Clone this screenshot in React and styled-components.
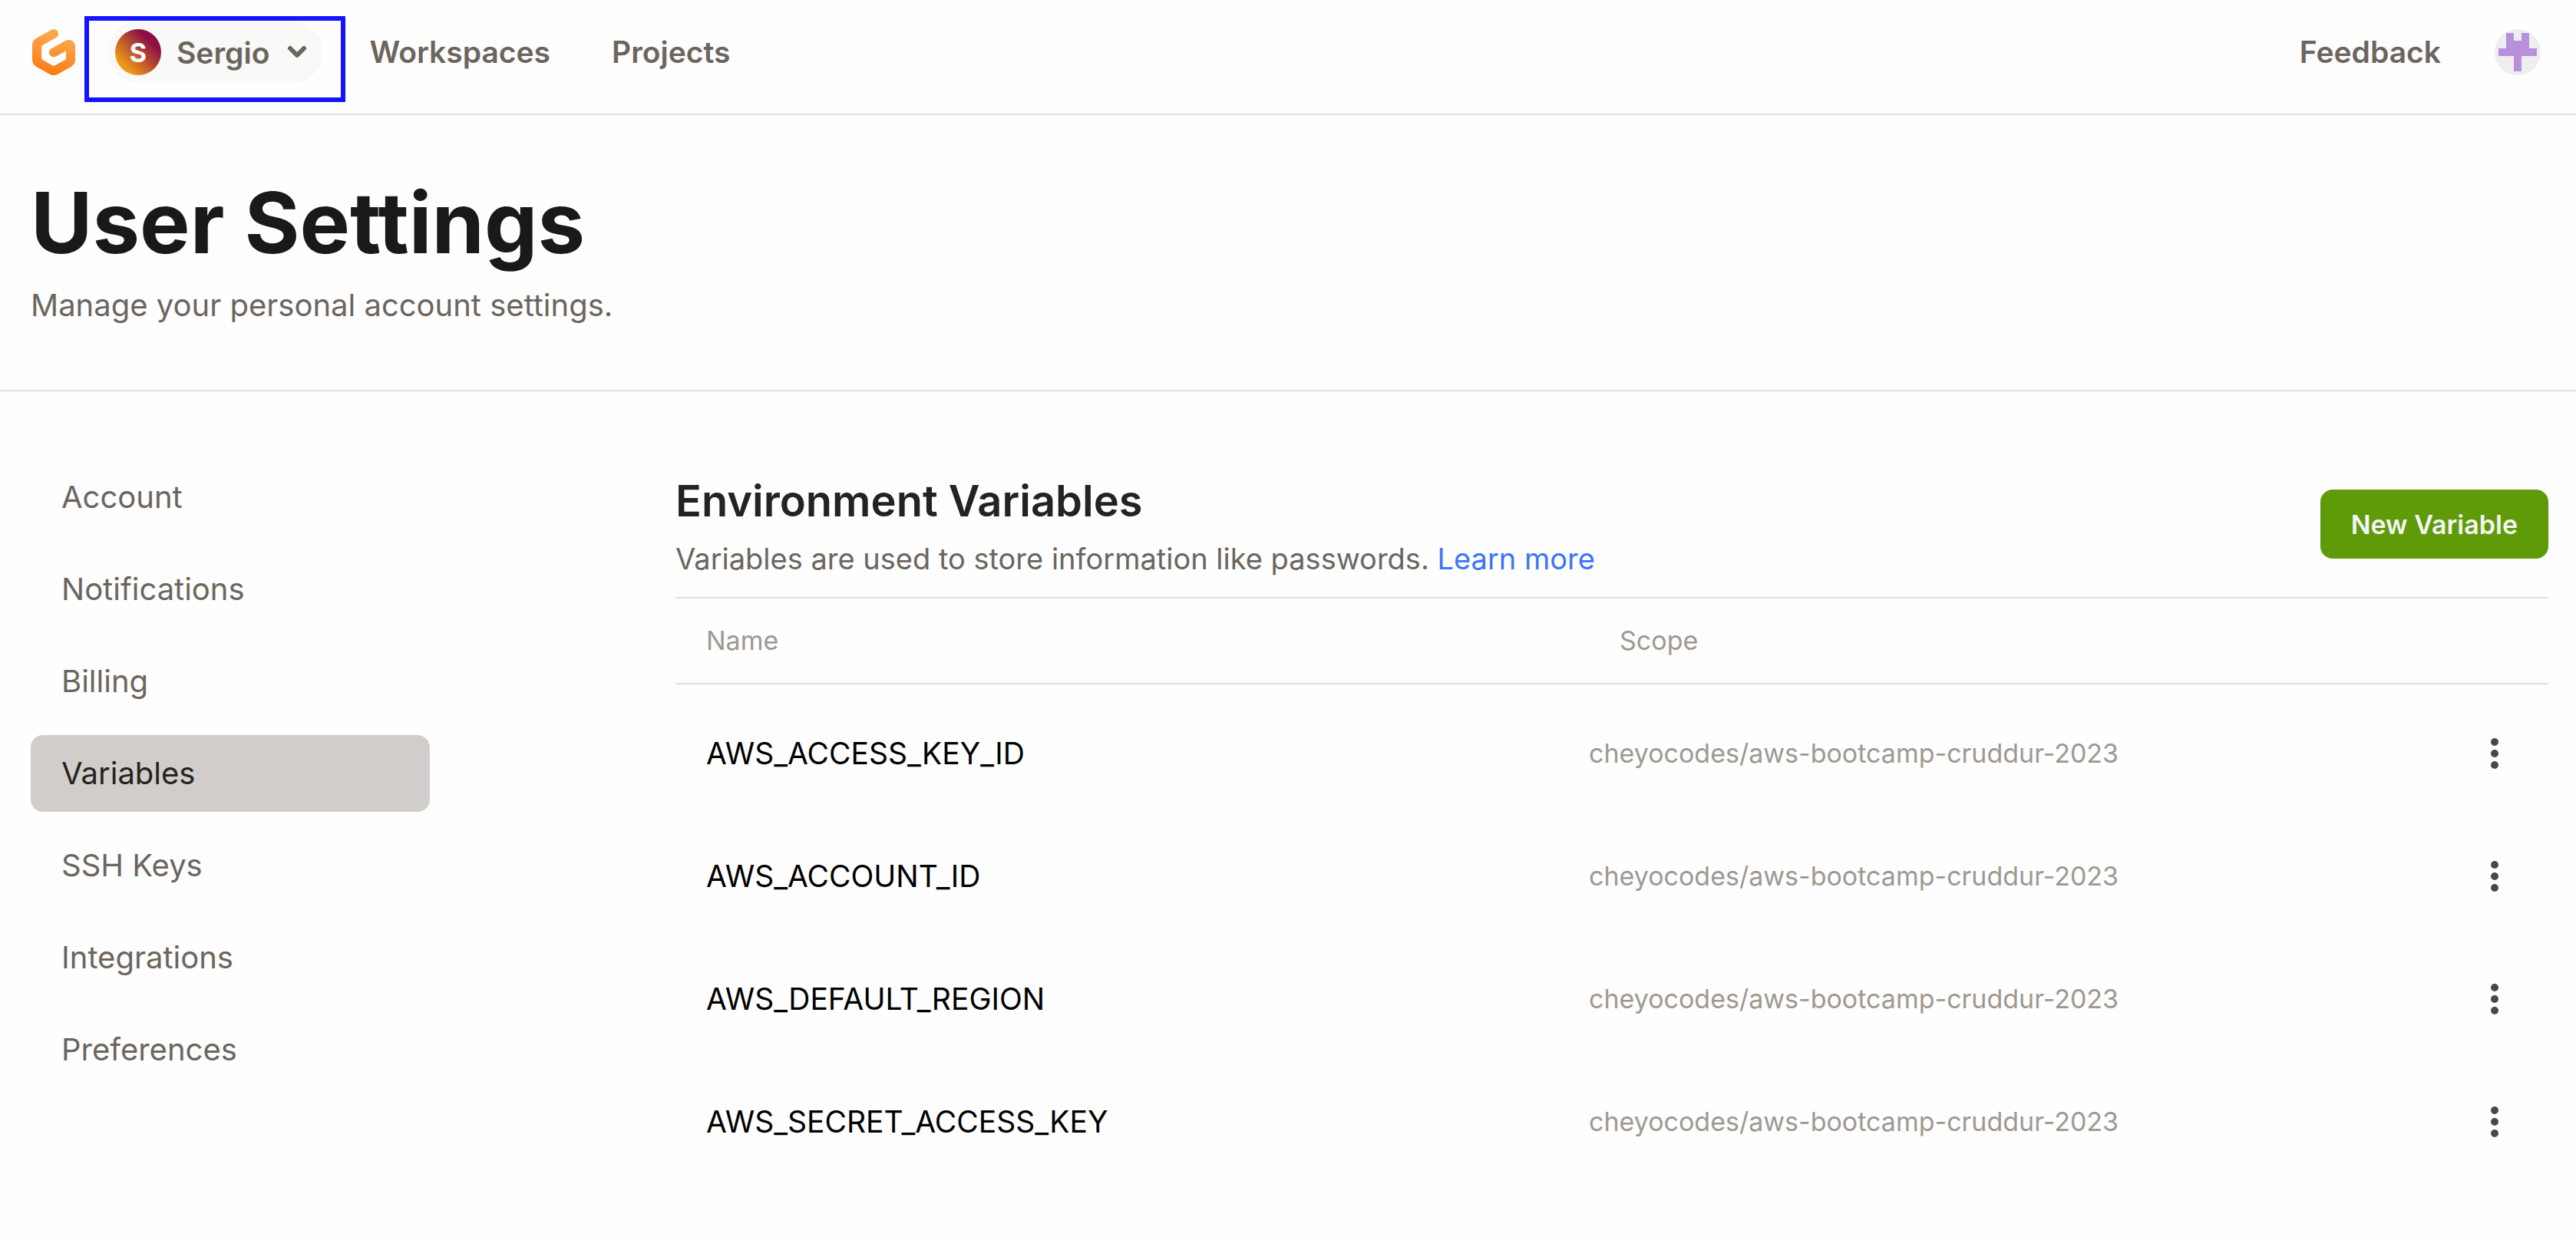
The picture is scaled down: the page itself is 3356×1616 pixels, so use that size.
import React from "react";
import styled, { createGlobalStyle } from "styled-components";

const GlobalStyle = createGlobalStyle`
  *, *::before, *::after { box-sizing: border-box; }
  body {
    margin: 0;
    background: #fefefe;
    color: #6c655e;
    font-family: Inter, "Liberation Sans", sans-serif;
    font-size: 40px;
    line-height: 60px;
  }
  h1, h2, p, ul { margin: 0; padding: 0; }
  button { font-family: inherit; cursor: pointer; }
  a { color: inherit; text-decoration: none; }
`;

const TopBar = styled.header`
  display: flex;
  align-items: center;
  justify-content: space-between;
  padding: 28px 46px 40px 42px;
  border-bottom: 2px solid #e0e0e0;
`;

const BarGroup = styled.div`
  display: flex;
  align-items: center;
  gap: ${(p) => p.$gap}px;
`;

const HomeLink = styled.a`
  display: flex;
`;

const OrgArea = styled.div`
  position: relative;
  margin-right: 60px;
`;

const Highlight = styled.span`
  position: absolute;
  top: -7px;
  right: -29px;
  bottom: -25px;
  left: -30px;
  border: 6px solid #1414ff;
  pointer-events: none;
`;

const OrgButton = styled.button`
  display: flex;
  align-items: center;
  gap: 20px;
  height: 80px;
  padding: 0 18px 0 10px;
  border: 0;
  border-radius: 40px;
  background: #f9f9f7;
  color: #6c655e;
  font-size: 39px;
  font-weight: 600;
`;

const OrgAvatar = styled.span`
  display: flex;
  align-items: center;
  justify-content: center;
  width: 60px;
  height: 60px;
  border-radius: 50%;
  background: linear-gradient(45deg, #ee9816 20%, #8c1045 75%);
  color: #ffffff;
  font-size: 34px;
  font-weight: 700;
`;

const MainNav = styled.nav`
  display: flex;
  gap: 80px;
`;

const NavLink = styled.a`
  font-size: 39px;
  font-weight: 600;
`;

const AvatarButton = styled.button`
  display: flex;
  padding: 0;
  border: 0;
  background: none;
`;

const PageHeader = styled.section`
  padding: 80px 40px;
  border-bottom: 2px solid #e0e0e0;
`;

const PageTitle = styled.h1`
  color: #1a1917;
  font-size: 110px;
  font-weight: 700;
  line-height: 120px;
`;

const PageSubtitle = styled.p`
  margin-top: 18px;
`;

const Columns = styled.div`
  display: grid;
  grid-template-columns: 520px minmax(0, 1fr);
  gap: 320px;
  padding: 88px 36px 60px 40px;
`;

const SideList = styled.ul`
  display: flex;
  flex-direction: column;
  gap: 20px;
  list-style: none;
`;

const SideLink = styled.a`
  display: block;
  padding: 20px 40px;
  border-radius: 16px;
  background: ${(p) => (p.$active ? "#d1cdca" : "transparent")};
  color: ${(p) => (p.$active ? "#242321" : "#6c655e")};
`;

const Content = styled.main`
  padding-top: 10px;
`;

const ContentHeader = styled.div`
  display: flex;
  align-items: center;
  justify-content: space-between;
  padding-bottom: 20px;
  border-bottom: 2px solid #e0e0e0;
`;

const SectionTitle = styled.h2`
  color: #242321;
  font-size: 56px;
  font-weight: 600;
  line-height: 90px;
`;

const SectionText = styled.p`
  font-size: 38px;
`;

const LearnLink = styled.a`
  color: #3b75f8;
`;

const PrimaryButton = styled.button`
  height: 90px;
  padding: 0 40px;
  border: 0;
  border-radius: 16px;
  background: #5f9b09;
  color: #f5f5f4;
  font-size: 34px;
  font-weight: 600;
`;

const Table = styled.table`
  width: 100%;
  table-layout: fixed;
  border-collapse: separate;
  border-spacing: 0;
`;

const HeadCell = styled.th`
  width: ${(p) => p.$width};
  height: 112px;
  padding: 0 40px;
  border-bottom: 2px solid #e0e0e0;
  color: #9f9891;
  font-size: 34px;
  font-weight: 400;
  text-align: left;
`;

const Cell = styled.td`
  height: 160px;
  padding: 20px 0 0;
`;

const NameCell = styled(Cell)`
  padding-left: 40px;
  color: #000000;
  font-size: 39px;
`;

const ScopeCell = styled(Cell)`
  color: #9f9891;
  font-size: 34px;
`;

const MenuButton = styled.button`
  display: flex;
  margin-left: auto;
  margin-right: 50px;
  padding: 10px 15px;
  border: 0;
  background: none;
`;

function Logo() {
  return (
    <svg width="56" height="60" viewBox="1.2 0 21.6 24" preserveAspectRatio="none" aria-hidden="true">
      <defs>
        <linearGradient id="logoFill" x1="0.65" y1="0" x2="0.4" y2="1">
          <stop offset="0" stopColor="#fdae58" />
          <stop offset="1" stopColor="#fa7c12" />
        </linearGradient>
      </defs>
      <path
        fill="url(#logoFill)"
        d="M14.033 1.195a2.387 2.387 0 0 1-.87 3.235l-6.98 4.04a.602.602 0 0 0-.3.522v6.342a.6.6 0 0 0 .3.521l5.524 3.199a.585.585 0 0 0 .586 0l5.527-3.199a.603.603 0 0 0 .299-.52V11.39l-4.969 2.838a2.326 2.326 0 0 1-3.19-.9 2.388 2.388 0 0 1 .89-3.23l7.108-4.062C20.123 4.8 22.8 6.384 22.8 8.901v6.914a4.524 4.524 0 0 1-2.245 3.919l-6.345 3.672a4.407 4.407 0 0 1-4.422 0l-6.344-3.672A4.524 4.524 0 0 1 1.2 15.816V8.51a4.524 4.524 0 0 1 2.245-3.918l7.393-4.28a2.326 2.326 0 0 1 3.195.883z"
      />
    </svg>
  );
}

function Chevron() {
  return (
    <svg width="32" height="32" viewBox="0 0 32 32" aria-hidden="true">
      <path d="M7 11l9 9 9-9" fill="none" stroke="#6c655e" strokeWidth="6" strokeLinecap="round" strokeLinejoin="round" />
    </svg>
  );
}

function Identicon() {
  return (
    <svg width="60" height="60" viewBox="0 0 60 60" aria-hidden="true">
      <circle cx="30" cy="30" r="30" fill="#eeeeee" />
      <path d="M15 5h10v10h10V5h10v20h10v10H35v20H25V35H5V25h10z" fill="#b890dc" />
    </svg>
  );
}

function Dots() {
  return (
    <svg width="10" height="40" viewBox="0 0 10 40" fill="#4c4742" aria-hidden="true">
      <circle cx="5" cy="5" r="5" />
      <circle cx="5" cy="20" r="5" />
      <circle cx="5" cy="35" r="5" />
    </svg>
  );
}

const sections = ["Account", "Notifications", "Billing", "Variables", "SSH Keys", "Integrations", "Preferences"];

const scope = "cheyocodes/aws-bootcamp-cruddur-2023";
const variables = [
  { name: "AWS_ACCESS_KEY_ID", scope },
  { name: "AWS_ACCOUNT_ID", scope },
  { name: "AWS_DEFAULT_REGION", scope },
  { name: "AWS_SECRET_ACCESS_KEY", scope },
];

export default function App() {
  return (
    <>
      <GlobalStyle />
      <TopBar>
        <BarGroup $gap={42}>
          <HomeLink href="#home" aria-label="Home">
            <Logo />
          </HomeLink>
          <BarGroup $gap={0}>
            <OrgArea>
              <OrgButton type="button" aria-haspopup="menu">
                <OrgAvatar>S</OrgAvatar>
                Sergio
                <Chevron />
              </OrgButton>
              <Highlight />
            </OrgArea>
            <MainNav>
              <NavLink href="#workspaces">Workspaces</NavLink>
              <NavLink href="#projects">Projects</NavLink>
            </MainNav>
          </BarGroup>
        </BarGroup>
        <BarGroup $gap={70}>
          <NavLink href="#feedback">Feedback</NavLink>
          <AvatarButton type="button" aria-label="User menu">
            <Identicon />
          </AvatarButton>
        </BarGroup>
      </TopBar>

      <PageHeader>
        <PageTitle>User Settings</PageTitle>
        <PageSubtitle>Manage your personal account settings.</PageSubtitle>
      </PageHeader>

      <Columns>
        <nav aria-label="Settings">
          <SideList>
            {sections.map((label) => (
              <li key={label}>
                <SideLink
                  href={"#" + label.toLowerCase().replace(" ", "-")}
                  $active={label === "Variables"}
                  aria-current={label === "Variables" ? "page" : undefined}
                >
                  {label}
                </SideLink>
              </li>
            ))}
          </SideList>
        </nav>

        <Content>
          <ContentHeader>
            <div>
              <SectionTitle>Environment Variables</SectionTitle>
              <SectionText>
                Variables are used to store information like passwords. <LearnLink href="#learn">Learn more</LearnLink>
              </SectionText>
            </div>
            <PrimaryButton type="button">New Variable</PrimaryButton>
          </ContentHeader>
          <Table>
            <thead>
              <tr>
                <HeadCell $width="1190px" scope="col">Name</HeadCell>
                <HeadCell $width="auto" scope="col">Scope</HeadCell>
                <HeadCell $width="200px" scope="col" aria-label="Actions" />
              </tr>
            </thead>
            <tbody>
              {variables.map((v) => (
                <tr key={v.name}>
                  <NameCell>{v.name}</NameCell>
                  <ScopeCell>{v.scope}</ScopeCell>
                  <Cell>
                    <MenuButton type="button" aria-label={"Actions for " + v.name}>
                      <Dots />
                    </MenuButton>
                  </Cell>
                </tr>
              ))}
            </tbody>
          </Table>
        </Content>
      </Columns>
    </>
  );
}
